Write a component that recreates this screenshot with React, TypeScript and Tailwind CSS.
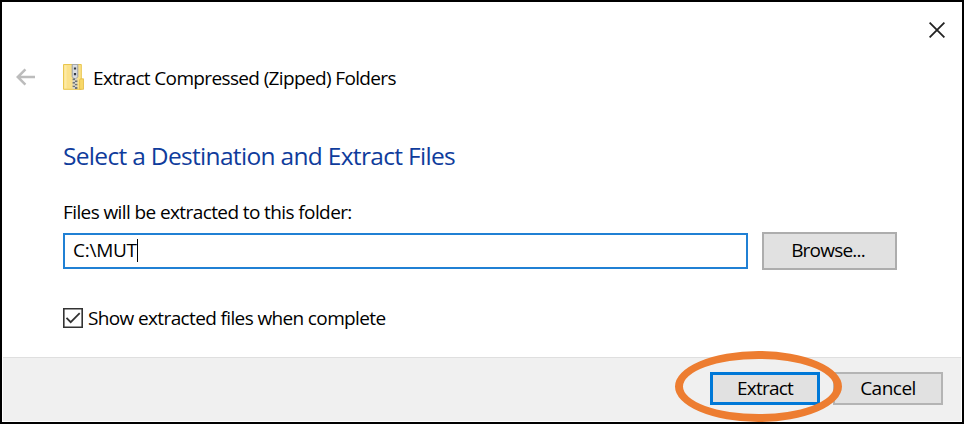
import React from "react";

function BackArrow() {
  return (
    <svg className="h-[18px] w-5 shrink-0" viewBox="0 0 20 18" fill="none" stroke="#bcbcbc" strokeWidth="2.5">
      <path d="M19 9H2M9.4 1.4 1.8 9l7.6 7.6" />
    </svg>
  );
}

function ZipFolder() {
  return (
    <svg className="h-[26px] w-[21px] shrink-0" viewBox="0 0 21 26">
      <path d="M.5.5h17.8v24.8H.5z" fill="#fbe18a" stroke="#e9c64d" />
      <path d="M1.5 1.5h2v22.8h-2z" fill="#fdeaa6" />
      <path d="M16.6 16.2c0-1 .7-1.4 1.6-1.4h2.3v10.5h-3.9z" fill="#f8d868" stroke="#e3ba42" strokeWidth=".8" />
      <path d="M9.2.3h5.6v12.4l-1.5 1.8h-2.6l-1.5-1.8z" fill="#d9dce0" stroke="#999da4" strokeWidth="1" />
      <path d="M10.9 3.4h2.2v2.2h-2.2zM10.9 9h2.2v2.3h-2.2z" fill="#343a45" />
      <path d="M9.6 14.6H12v1.7H9.6zM12 16.3h2.4V18H12zM9.6 18H12v1.7H9.6zM12 19.7h2.4v1.7H12zM9.6 21.4H12v1.7H9.6zM12 23.1h2.4v1.9H12z" fill="#6c727c" />
      <path d="M12 14.6h2.4v1.7H12zM9.6 16.3H12V18H9.6zM12 18h2.4v1.7H12zM9.6 19.7H12v1.7H9.6zM12 21.4h2.4v1.7H12zM9.6 23.1H12V25H9.6z" fill="#d5d3c8" />
    </svg>
  );
}

export default function App() {
  return (
    <div className="relative flex h-[424px] w-[964px] flex-col overflow-hidden border-2 border-black bg-white font-['Open_Sans',sans-serif] text-[19px] leading-6 text-black">
      <header className="flex h-[54px] shrink-0 justify-end pr-[17px] pt-5">
        <button aria-label="Close" className="h-4 w-4">
          <svg className="h-4 w-4" viewBox="0 0 16 16" fill="none" stroke="#222" strokeWidth="1.8">
            <path d="m.6.6 14.8 14.8M15.4.6.6 15.4" />
          </svg>
        </button>
      </header>
      <div className="flex h-[42px] shrink-0 items-center pl-[14px]">
        <BackArrow />
        <div className="ml-[27px]"><ZipFolder /></div>
        <span className="ml-[9px] mt-0.5 whitespace-nowrap tracking-[-0.64px]">Extract Compressed (Zipped) Folders</span>
      </div>
      <main className="flex grow flex-col pl-[61px]">
        <h1 className="mt-[42px] whitespace-nowrap text-[24.5px] leading-8 tracking-[-0.68px] text-[#0f3c9c]">
          Select a Destination and Extract Files
        </h1>
        <label className="mt-7 whitespace-nowrap tracking-[-0.6px]">Files will be extracted to this folder:</label>
        <div className="mt-2 flex items-start gap-[14px]">
          <div className="mt-px flex h-9 w-[685px] items-center border-2 border-[#2080d4] pl-2">
            <span className="-mt-0.5 tracking-[-0.25px]">C:\MUT</span>
            <span className="-mt-0.5 h-[23px] w-px bg-black" />
          </div>
          <button className="flex h-[38px] w-[135px] items-center justify-center border-2 border-[#adadad] bg-[#e1e1e1] pb-0.5 pr-[3px]">
            <span className="tracking-[-0.8px]">Browse...</span>
          </button>
        </div>
        <label className="mt-9 flex items-center gap-[5px]">
          <svg className="h-5 w-5" viewBox="0 0 20 20" fill="none" stroke="#333">
            <path d="M.8.8h18.4v18.4H.8z" strokeWidth="1.6" />
            <path d="m3.5 9.8 4.2 4.3 9-9" strokeWidth="1.8" />
          </svg>
          <span className="tracking-[-0.63px]">Show extracted files when complete</span>
        </label>
      </main>
      <footer className="mx-px mb-px flex h-[64px] shrink-0 items-start justify-end gap-[13px] border-t border-[#dfdfdf] bg-[#f0f0f0] pr-[18px] pt-[14px]">
        <button className="flex h-[33px] w-[110px] items-center justify-center border-[3px] border-[#0078d7] bg-[#e1e1e1] pb-px">
          <span className="tracking-[-0.75px]">Extract</span>
        </button>
        <button className="flex h-[33px] w-[110px] items-center justify-center border-2 border-[#b4b4b4] bg-[#e1e1e1] pb-px">
          <span className="tracking-[-0.5px]">Cancel</span>
        </button>
      </footer>
      <div className="pointer-events-none absolute left-[673px] top-[349px] h-[71px] w-[167px] rounded-[50%] border-8 border-[#ed7d31]" />
    </div>
  );
}
